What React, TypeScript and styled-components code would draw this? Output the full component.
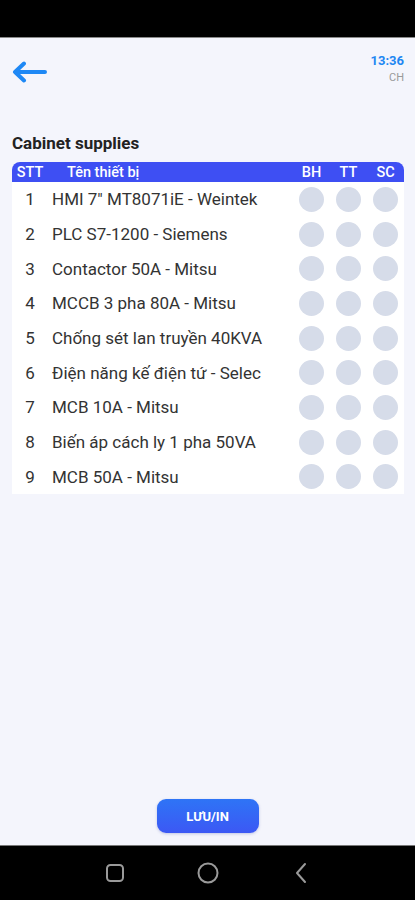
import React from 'react';
import styled, { createGlobalStyle } from 'styled-components';

const GlobalStyle = createGlobalStyle`
  html, body {
    margin: 0;
    padding: 0;
    background: #000;
  }
  * {
    box-sizing: border-box;
  }
`;

const Screen = styled.div`
  width: 415px;
  height: 900px;
  display: flex;
  flex-direction: column;
  font-family: Roboto, 'Noto Sans', Arial, sans-serif;
  background: #f4f5fc;
`;

const StatusBar = styled.div`
  height: 38px;
  background: #000;
  border-bottom: 1px solid #8a8a8a;
`;

const Content = styled.div`
  flex: 1;
  display: flex;
  flex-direction: column;
  padding: 0 11px 0 12px;
`;

const TopBar = styled.div`
  display: flex;
  justify-content: space-between;
  align-items: flex-start;
  padding-top: 14px;
  height: 95px;
`;

const BackButton = styled.button`
  border: none;
  background: none;
  padding: 0;
  margin-top: 2px;
  width: 36px;
  height: 36px;
  display: flex;
  align-items: center;
  cursor: pointer;
`;

const Clock = styled.div`
  display: flex;
  flex-direction: column;
  align-items: flex-end;
  gap: 3px;
  margin-top: 1px;
`;

const Time = styled.div`
  font-size: 13px;
  font-weight: 700;
  color: #1f87f2;
  line-height: 15px;
`;

const Meridiem = styled.div`
  font-size: 11px;
  color: #9a9a9a;
  line-height: 13px;
`;

const Title = styled.div`
  font-size: 17px;
  font-weight: 700;
  color: #222;
  line-height: 20px;
  margin-bottom: 9px;
`;

const Table = styled.div`
  background: #fff;
  border-radius: 8px 8px 0 0;
  overflow: hidden;
`;

const Row = styled.div<{ $head?: boolean }>`
  display: grid;
  grid-template-columns: 36px 1fr 37px 37px 37px;
  align-items: center;
  height: ${(p) => (p.$head ? '20px' : '34.7px')};
  background: ${(p) => (p.$head ? '#3e4ff3' : '#fff')};
  color: ${(p) => (p.$head ? '#fff' : '#333')};
  font-size: ${(p) => (p.$head ? '14.5px' : '17px')};
  font-weight: ${(p) => (p.$head ? 500 : 400)};
`;

const Cell = styled.div<{ $center?: boolean; $indent?: number }>`
  padding-left: ${(p) => p.$indent ?? 0}px;
  white-space: nowrap;
  display: flex;
  justify-content: ${(p) => (p.$center ? 'center' : 'flex-start')};
  align-items: center;
`;

const Dot = styled.span`
  width: 25px;
  height: 25px;
  border-radius: 50%;
  background: #d6dce9;
`;

const Spacer = styled.div`
  flex: 1;
`;

const Footer = styled.div`
  display: flex;
  justify-content: center;
  padding-bottom: 12px;
  padding-right: 1px;
`;

const SaveButton = styled.button`
  width: 102px;
  height: 34px;
  border: none;
  border-radius: 9px;
  background: linear-gradient(180deg, #2e74f6 0%, #3c58f4 100%);
  color: #fff;
  font-family: Roboto, Arial, sans-serif;
  font-size: 13px;
  font-weight: 700;
  box-shadow: 0 1px 3px rgba(40, 60, 160, 0.25);
  cursor: pointer;
`;

const NavBar = styled.div`
  height: 55px;
  background: #000;
  border-top: 1px solid #777;
  display: flex;
  justify-content: space-around;
  align-items: center;
  padding: 0 68px;
`;

const NavItem = styled.div`
  width: 40px;
  display: flex;
  justify-content: center;
`;

const items = [
  'HMI 7" MT8071iE - Weintek',
  'PLC S7-1200 - Siemens',
  'Contactor 50A - Mitsu',
  'MCCB 3 pha 80A - Mitsu',
  'Chống sét lan truyền 40KVA',
  'Điện năng kế điện tứ - Selec',
  'MCB 10A - Mitsu',
  'Biến áp cách ly 1 pha 50VA',
  'MCB 50A - Mitsu',
];

export default function App() {
  return (
    <>
      <GlobalStyle />
      <Screen>
        <StatusBar />
        <Content>
          <TopBar>
            <BackButton aria-label="back">
              <svg width="35" height="22" viewBox="0 0 35 22" fill="none">
                <path
                  d="M33 11H4M12 2.5L3 11l9 8.5"
                  stroke="#1e88f5"
                  strokeWidth="4"
                  strokeLinecap="round"
                  strokeLinejoin="round"
                />
              </svg>
            </BackButton>
            <Clock>
              <Time>13:36</Time>
              <Meridiem>CH</Meridiem>
            </Clock>
          </TopBar>
          <Title>Cabinet supplies</Title>
          <Table>
            <Row $head>
              <Cell $center>STT</Cell>
              <Cell $indent={19}>Tên thiết bị</Cell>
              <Cell $center>BH</Cell>
              <Cell $center>TT</Cell>
              <Cell $center>SC</Cell>
            </Row>
            {items.map((name, i) => (
              <Row key={name}>
                <Cell $center>{i + 1}</Cell>
                <Cell $indent={4}>{name}</Cell>
                <Cell $center><Dot /></Cell>
                <Cell $center><Dot /></Cell>
                <Cell $center><Dot /></Cell>
              </Row>
            ))}
          </Table>
          <Spacer />
          <Footer>
            <SaveButton>LƯU/IN</SaveButton>
          </Footer>
        </Content>
        <NavBar>
          <NavItem>
            <svg width="20" height="20" viewBox="0 0 20 20" fill="none">
              <rect x="2" y="2" width="16" height="16" rx="3.5" stroke="#9a9a9a" strokeWidth="2" />
            </svg>
          </NavItem>
          <NavItem>
            <svg width="22" height="22" viewBox="0 0 22 22" fill="none">
              <circle cx="11" cy="11" r="9.5" stroke="#9a9a9a" strokeWidth="2" />
            </svg>
          </NavItem>
          <NavItem>
            <svg width="14" height="22" viewBox="0 0 14 22" fill="none">
              <path d="M11 2L3 11l8 9" stroke="#9a9a9a" strokeWidth="2" strokeLinecap="round" strokeLinejoin="round" />
            </svg>
          </NavItem>
        </NavBar>
      </Screen>
    </>
  );
}
